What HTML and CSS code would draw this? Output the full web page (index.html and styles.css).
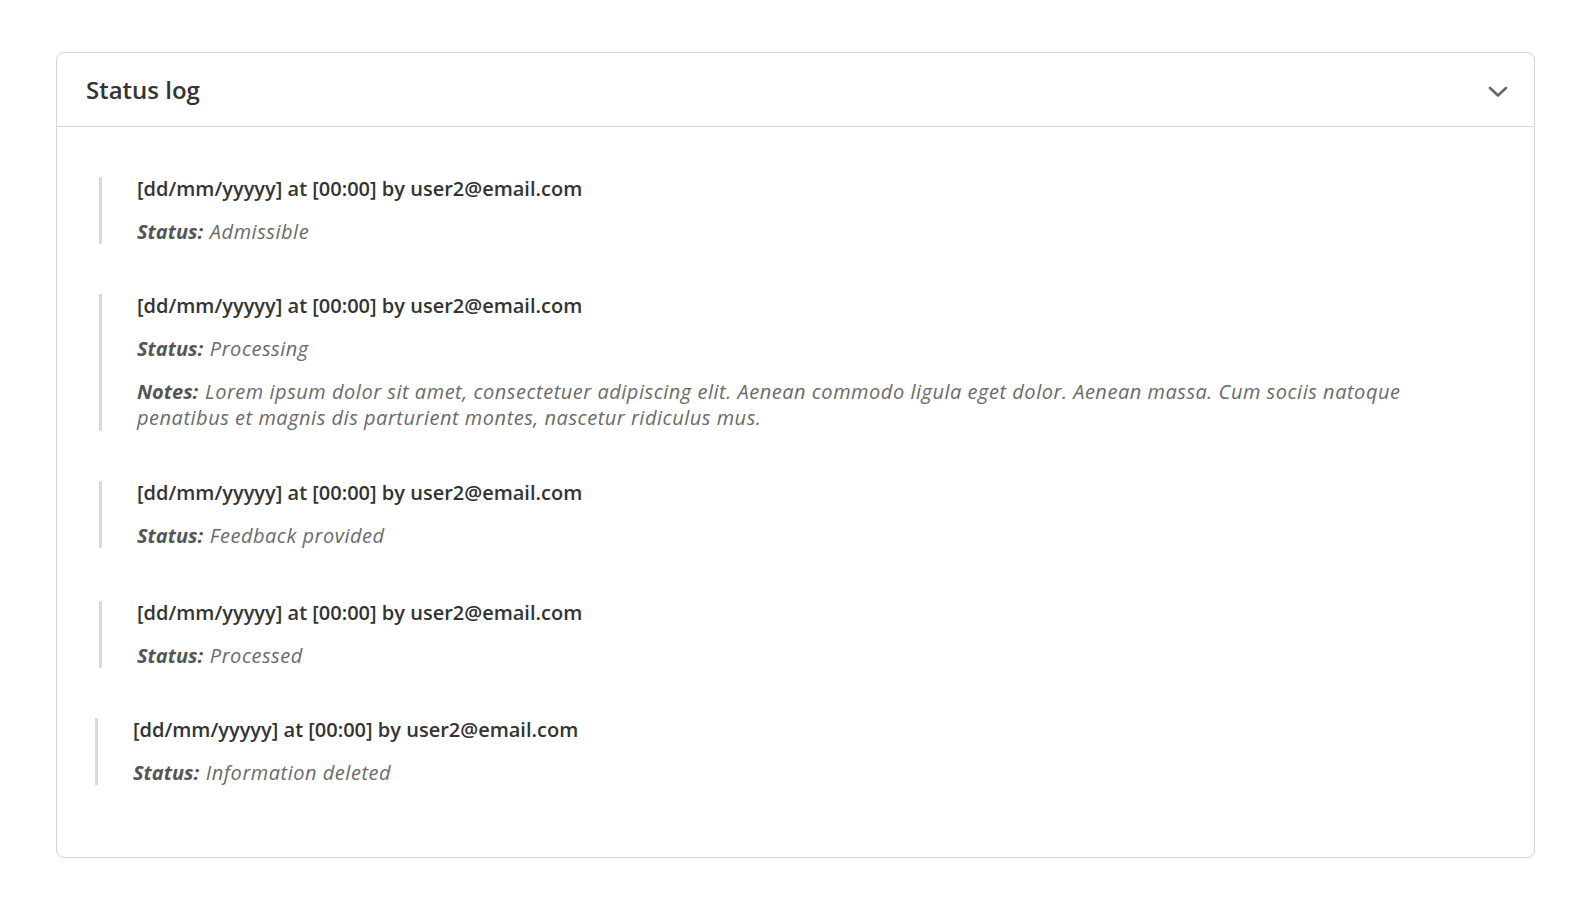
FILE: index.html
```html
<!DOCTYPE html>
<html lang="en">
<head>
  <meta charset="UTF-8" />
  <meta name="viewport" content="width=device-width, initial-scale=1.0"/>
  <title>Status log</title>
  <link rel="stylesheet" href="styles.css">
</head>
<body>
  <div class="panel">
    <div class="panel-header">
      <h2>Status log</h2>
      <svg class="chevron" width="20" height="12" viewBox="0 0 20 12">
        <path d="M2 2 L10 9.5 L18 2" fill="none" stroke="#666" stroke-width="2.6" stroke-linecap="round" stroke-linejoin="round"/>
      </svg>
    </div>
    <div class="panel-body">
      <div class="log-entry">
        <p class="log-title">[dd/mm/yyyyy] at [00:00] by user2@email.com</p>
        <p class="log-line"><strong>Status:</strong> Admissible</p>
      </div>
      <div class="log-entry">
        <p class="log-title">[dd/mm/yyyyy] at [00:00] by user2@email.com</p>
        <p class="log-line"><strong>Status:</strong> Processing</p>
        <p class="log-line notes"><strong>Notes:</strong> Lorem ipsum dolor sit amet, consectetuer adipiscing elit. Aenean commodo ligula eget dolor. Aenean massa. Cum sociis natoque penatibus et magnis dis parturient montes, nascetur ridiculus mus.</p>
      </div>
      <div class="log-entry">
        <p class="log-title">[dd/mm/yyyyy] at [00:00] by user2@email.com</p>
        <p class="log-line"><strong>Status:</strong> Feedback provided</p>
      </div>
      <div class="log-entry spaced">
        <p class="log-title">[dd/mm/yyyyy] at [00:00] by user2@email.com</p>
        <p class="log-line"><strong>Status:</strong> Processed</p>
      </div>
      <div class="log-entry last">
        <p class="log-title">[dd/mm/yyyyy] at [00:00] by user2@email.com</p>
        <p class="log-line"><strong>Status:</strong> Information deleted</p>
      </div>
    </div>
  </div>
</body>
</html>
```

FILE: styles.css
```css
* {
    margin: 0;
    padding: 0;
    box-sizing: border-box;
}
body {
    background: #fff;
    font-family: 'Open Sans', sans-serif;
    color: #333;
    padding: 52px 53px 0 56px;
}
.panel {
    border: 1px solid #d4d4d4;
    border-radius: 8px;
    background: #fff;
}
.panel-header {
    display: flex;
    justify-content: space-between;
    align-items: center;
    height: 74px;
    padding: 0 26px 0 29px;
    border-bottom: 1px solid #d4d4d4;
}
.panel-header h2 {
    font-size: 24px;
    font-weight: 600;
    color: #333;
}
.chevron {
    margin-top: 4px;
}
.panel-body {
    display: flex;
    flex-direction: column;
    gap: 50px;
    padding: 50px 60px 72px 42px;
}
.log-entry {
    border-left: 3px solid #d9d9d9;
    padding-left: 35px;
    display: flex;
    flex-direction: column;
    gap: 18px;
}
.log-entry.spaced {
    margin-top: 3px;
}
.log-entry.last {
    margin-left: -4px;
}
.log-title {
    font-size: 20px;
    line-height: 24px;
    font-weight: 600;
    color: #333;
}
.log-line {
    font-size: 20px;
    line-height: 25px;
    font-style: italic;
    font-weight: 400;
    letter-spacing: 0.52px;
    color: #6a6a6a;
}
.log-line strong {
    font-weight: 700;
    letter-spacing: 0;
    margin-right: 1px;
    color: #555;
}
.log-line.notes {
    line-height: 26px;
}
```
